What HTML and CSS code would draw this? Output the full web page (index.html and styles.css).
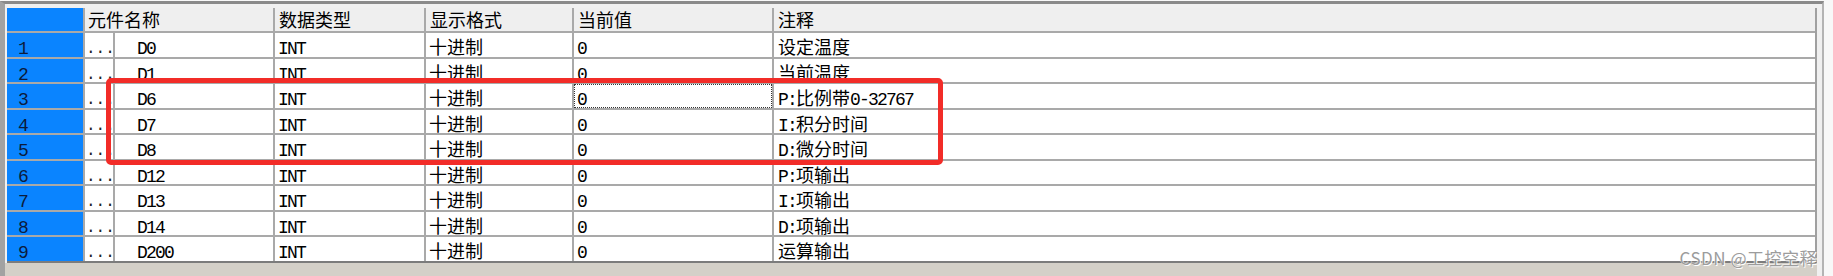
FILE: index.html
```html
<!DOCTYPE html>
<html lang="zh">
<head>
<meta charset="utf-8">
<title>元件监控</title>
<link rel="stylesheet" href="styles.css">
</head>
<body>
<div class="frame">
  <div class="grid">
    <div class="c h hb"></div>
    <div class="c h span2">元件名称</div>
    <div class="c h">数据类型</div>
    <div class="c h">显示格式</div>
    <div class="c h">当前值</div>
    <div class="c h">注释</div>

    <div class="c num"><span class="l">1</span></div>
    <div class="c dots"><span class="l">...</span></div>
    <div class="c name"><span class="l">D0</span></div>
    <div class="c type"><span class="l">INT</span></div>
    <div class="c fmt">十进制</div>
    <div class="c val"><span class="l">0</span></div>
    <div class="c cmt">设定温度</div>

    <div class="c num"><span class="l">2</span></div>
    <div class="c dots"><span class="l">...</span></div>
    <div class="c name"><span class="l">D1</span></div>
    <div class="c type"><span class="l">INT</span></div>
    <div class="c fmt">十进制</div>
    <div class="c val"><span class="l">0</span></div>
    <div class="c cmt">当前温度</div>

    <div class="c num"><span class="l">3</span></div>
    <div class="c dots"><span class="l">...</span></div>
    <div class="c name"><span class="l">D6</span></div>
    <div class="c type"><span class="l">INT</span></div>
    <div class="c fmt">十进制</div>
    <div class="c val focus"><span class="l">0</span></div>
    <div class="c cmt"><span class="l">P:</span>比例带<span class="l">0-32767</span></div>

    <div class="c num"><span class="l">4</span></div>
    <div class="c dots"><span class="l">...</span></div>
    <div class="c name"><span class="l">D7</span></div>
    <div class="c type"><span class="l">INT</span></div>
    <div class="c fmt">十进制</div>
    <div class="c val"><span class="l">0</span></div>
    <div class="c cmt"><span class="l">I:</span>积分时间</div>

    <div class="c num"><span class="l">5</span></div>
    <div class="c dots"><span class="l">...</span></div>
    <div class="c name"><span class="l">D8</span></div>
    <div class="c type"><span class="l">INT</span></div>
    <div class="c fmt">十进制</div>
    <div class="c val"><span class="l">0</span></div>
    <div class="c cmt"><span class="l">D:</span>微分时间</div>

    <div class="c num"><span class="l">6</span></div>
    <div class="c dots"><span class="l">...</span></div>
    <div class="c name"><span class="l">D12</span></div>
    <div class="c type"><span class="l">INT</span></div>
    <div class="c fmt">十进制</div>
    <div class="c val"><span class="l">0</span></div>
    <div class="c cmt"><span class="l">P:</span>项输出</div>

    <div class="c num"><span class="l">7</span></div>
    <div class="c dots"><span class="l">...</span></div>
    <div class="c name"><span class="l">D13</span></div>
    <div class="c type"><span class="l">INT</span></div>
    <div class="c fmt">十进制</div>
    <div class="c val"><span class="l">0</span></div>
    <div class="c cmt"><span class="l">I:</span>项输出</div>

    <div class="c num"><span class="l">8</span></div>
    <div class="c dots"><span class="l">...</span></div>
    <div class="c name"><span class="l">D14</span></div>
    <div class="c type"><span class="l">INT</span></div>
    <div class="c fmt">十进制</div>
    <div class="c val"><span class="l">0</span></div>
    <div class="c cmt"><span class="l">D:</span>项输出</div>

    <div class="c num"><span class="l">9</span></div>
    <div class="c dots"><span class="l">...</span></div>
    <div class="c name"><span class="l">D200</span></div>
    <div class="c type"><span class="l">INT</span></div>
    <div class="c fmt">十进制</div>
    <div class="c val"><span class="l">0</span></div>
    <div class="c cmt">运算输出</div>
  </div>
  <div class="footer"></div>
</div>
<div class="highlight"></div>
<div class="watermark">CSDN @工控空释</div>
</body>
</html>
```

FILE: styles.css
```css
* {
  box-sizing: border-box;
}

html,
body {
  margin: 0;
  padding: 0;
}

body {
  position: relative;
  width: 1833px;
  height: 276px;
  overflow: hidden;
  background: #f8f8f8;
  font-family: "Noto Sans CJK SC", sans-serif;
  font-size: 18px;
  color: #000;
}

.frame {
  margin-top: 1px;
  width: 1824px;
  height: 275px;
  border-top: 3px solid #8a8a8a;
  border-left: 5px solid #a2a2a2;
  border-right: 2px solid #b4b4b4;
  background: #f0f0f0;
  padding: 4px 5px 0 2px;
}

.grid {
  display: grid;
  grid-template-columns: 76px 28px 158px 149px 146px 198px 1041px;
  grid-template-rows: 23px repeat(9, 23.5px);
  gap: 2px;
  background: #a9a9a9;
  border-right: 2px solid #a0a0a0;
  border-bottom: 2px solid #7c7c7c;
}

.c {
  background: #fff;
  padding: 4px 0 0 3px;
  line-height: 18px;
  white-space: nowrap;
}

.l {
  font-family: "Liberation Mono", monospace;
  line-height: 14px;
  letter-spacing: -1.8px;
}

.h {
  background: #efefef;
  padding-top: 2px;
  padding-left: 4px;
}

.hb {
  background: #0a84ff;
}

.span2 {
  grid-column: span 2;
  padding-left: 3px;
}

.num {
  background: #0a84ff;
  padding-left: 11px;
  color: #0c1c3c;
}

.dots {
  padding-left: 1px;
  font-size: 16px;
}

.dots .l {
  letter-spacing: 0;
  color: #222;
}

.name {
  padding-left: 22px;
}

.type {
  padding-left: 3px;
}

.fmt {
  padding-left: 3px;
}

.val {
  padding-left: 3px;
}

.cmt {
  padding-left: 4px;
}

.focus {
  outline: 1px dotted #333;
  outline-offset: -1px;
}

.footer {
  height: 14px;
  margin-left: -2px;
  background: #d4d0c8;
}

.highlight {
  position: absolute;
  left: 106px;
  top: 78px;
  width: 837px;
  height: 87px;
  border: 5px solid #f22c28;
  border-radius: 5px;
}

.watermark {
  position: absolute;
  right: 16px;
  top: 248px;
  font-family: "Noto Sans CJK SC", sans-serif;
  font-size: 17px;
  line-height: 20px;
  letter-spacing: 0.5px;
  color: #9c9c9c;
  text-shadow: 1px 1px 0 #fff, -1px -1px 0 rgba(255, 255, 255, 0.6);
}
```
